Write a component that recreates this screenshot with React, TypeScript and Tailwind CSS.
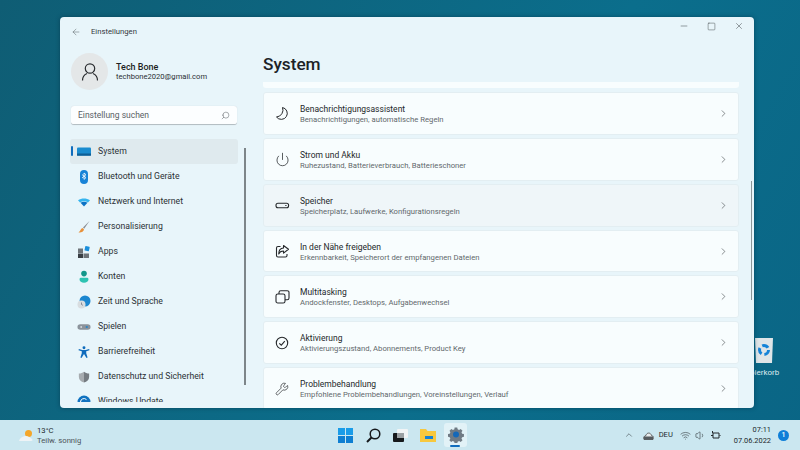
import { ChevronRight, Power, Wrench, Search, ArrowLeft, Minus, Square, X, ChevronUp, Wifi, Volume1 } from 'lucide-react';
import type { ReactNode } from 'react';

const cards: { title: string; sub: string; icon: ReactNode; hover?: boolean; h: string }[] = [
    {
        title: 'Benachrichtigungsassistent',
        sub: 'Benachrichtigungen, automatische Regeln',
        h: 'h-[43px]',
        icon: (
            <svg width="15" height="15" viewBox="0 0 15 15" fill="none" stroke="currentColor" strokeWidth="1">
                <path d="M7.500 1.500A6 6 0 1 1 1.500 11 A7 7 0 0 0 7.500 1.500z" strokeLinejoin="round" />
            </svg>
        ),
    },
    { title: 'Strom und Akku', sub: 'Ruhezustand, Batterieverbrauch, Batterieschoner', icon: <Power size={15} strokeWidth={1.2} />, h: 'h-[43px]' },
    {
        title: 'Speicher',
        sub: 'Speicherplatz, Laufwerke, Konfigurationsregeln',
        hover: true,
        h: 'h-[43px]',
        icon: (
            <svg width="15" height="15" viewBox="0 0 15 15" fill="none" stroke="currentColor" strokeWidth="1.100">
                <rect x="1" y="5.200" width="12.600" height="4.600" rx="2" />
                <path d="M10.300 7.500h1.200" />
            </svg>
        ),
    },
    {
        title: 'In der Nähe freigeben',
        sub: 'Erkennbarkeit, Speicherort der empfangenen Dateien',
        h: 'h-[42px]',
        icon: (
            <svg width="15" height="15" viewBox="0 0 15 15" fill="none" stroke="currentColor" strokeWidth="1.100" strokeLinejoin="round">
                <path d="M5.500 2.500H3a1.500 1.500 0 0 0-1.500 1.500v7.500A1.500 1.500 0 0 0 3 13h7.500a1.500 1.500 0 0 0 1.500-1.500V10" />
                <path d="M8.500 1.500l5 3.800-5 3.800V7c-2.500 0-4 1-4.800 3 0-3.500 1.800-5.800 4.800-6z" />
            </svg>
        ),
    },
    {
        title: 'Multitasking',
        sub: 'Andockfenster, Desktops, Aufgabenwechsel',
        h: 'h-[43px]',
        icon: (
            <svg width="15" height="15" viewBox="0 0 15 15" fill="none" stroke="currentColor" strokeWidth="1.100">
                <rect x="1" y="5" width="9" height="9" rx="1.800" />
                <path d="M4 5V3.500A1.800 1.800 0 0 1 5.800 1.700h6.400A1.800 1.800 0 0 1 14 3.500v5.400a1.800 1.800 0 0 1-1.800 1.800H10" />
            </svg>
        ),
    },
    {
        title: 'Aktivierung',
        sub: 'Aktivierungszustand, Abonnements, Product Key',
        h: 'h-[43px]',
        icon: (
            <svg width="14" height="14" viewBox="0 0 14 14" fill="none" stroke="currentColor" strokeWidth="1.100">
                <circle cx="7" cy="7" r="5.700" />
                <path d="M4.300 7.300l2 1.900 3.500-4" />
            </svg>
        ),
    },
    { title: 'Problembehandlung', sub: 'Empfohlene Problembehandlungen, Voreinstellungen, Verlauf', icon: <Wrench size={14} strokeWidth={1.2} />, h: 'h-[43px]' },
];

const navIcon = {
    system: (
        <svg width="14" height="14" viewBox="0 0 14 14">
            <rect x="0" y="2.500" width="14" height="8" rx="1" fill="#1a8ccf" />
            <rect x="0" y="8.500" width="14" height="2.200" fill="#0e5f96" />
        </svg>
    ),
    bluetooth: (
        <svg width="14" height="14" viewBox="0 0 14 14">
            <rect x="3" y="0" width="8" height="14" rx="4" fill="#1883d7" />
            <path d="M5 4.600l4 3-2 1.800V3l2 1.700-4 3.300" fill="none" stroke="#fff" strokeWidth="0.800" />
        </svg>
    ),
    network: (
        <svg width="14" height="14" viewBox="0 0 14 14">
            <path d="M1 5.200c3.500-2.400 8.500-2.400 12 0L11 7.400C8.500 5.800 5.500 5.800 3 7.400z" fill="#35b4ee" />
            <path d="M3.500 7.800c2.200-1.400 4.800-1.400 7 0L7 11.400z" fill="#0b72c4" />
        </svg>
    ),
    brush: (
        <svg width="14" height="14" viewBox="0 0 14 14">
            <path d="M12.500 1L6 7.500l1.200 1.200z" fill="#8a8f96" />
            <path d="M5.500 8C3.500 8.500 3.500 11 1.500 12.500c2.500.4 5.200-.6 5.500-3.200z" fill="#e8913a" />
        </svg>
    ),
    apps: (
        <svg width="14" height="14" viewBox="0 0 14 14">
            <rect x="1" y="3.500" width="5" height="4.500" fill="#6e7479" />
            <rect x="1" y="8.500" width="5" height="4.500" fill="#3a3f44" />
            <rect x="6.500" y="8.500" width="5.500" height="4.500" fill="#6e7479" />
            <rect x="8" y="1.500" width="4.500" height="4.500" rx="0.500" fill="#1b8fdb" transform="rotate(12 10.500 3)" />
        </svg>
    ),
    konten: (
        <svg width="14" height="14" viewBox="0 0 14 14">
            <circle cx="7" cy="3.600" r="2.800" fill="#12968a" />
            <path d="M2.500 9c0-1 1-1.300 2-1.300h5c1 0 2 .3 2 1.300 0 2.500-2 3.800-4.500 3.800S2.500 11.500 2.500 9z" fill="#2dc3b2" />
        </svg>
    ),
    zeit: (
        <svg width="14" height="14" viewBox="0 0 14 14">
            <circle cx="8" cy="6" r="5.500" fill="#1b87d0" />
            <circle cx="4.500" cy="9.500" r="4" fill="#d8dde0" />
            <path d="M4.500 7.500v2l1.400.8" fill="none" stroke="#667" strokeWidth="0.700" />
        </svg>
    ),
    spielen: (
        <svg width="15" height="14" viewBox="0 0 15 14">
            <rect x="0.500" y="4" width="14" height="6" rx="3" fill="#8b939b" />
            <circle cx="4.500" cy="7" r="1" fill="#d5dadd" />
            <circle cx="10.500" cy="7" r="1.200" fill="#2a86c8" />
        </svg>
    ),
    barriere: (
        <svg width="12" height="12" viewBox="0 0 14 14" fill="#0f6cbd">
            <circle cx="7" cy="2" r="1.700" />
            <path d="M1 3.600l4 1.200h4l4-1.200.4 1.300L9.600 6.200v2.400l1.600 4.900-1.300.4L7 9.200l-2.900 4.700-1.300-.4 1.600-4.900V6.200L.6 4.900z" />
        </svg>
    ),
    schutz: (
        <svg width="12" height="12" viewBox="0 0 14 14">
            <path d="M7 .8c1.700 1.300 3.600 2 6 2.100v4C13 10.300 10.500 12.300 7 13.500z" fill="#757b80" />
            <path d="M7 .8C5.300 2.100 3.400 2.800 1 2.900v4c0 3.400 2.500 5.400 6 6.600z" fill="#a6abaf" />
        </svg>
    ),
    update: (
        <svg width="14" height="14" viewBox="0 0 14 14">
            <circle cx="7" cy="7" r="6.500" fill="#1072c0" />
            <path d="M3.500 7a3.500 3.500 0 0 1 6-2.400M10.500 7a3.500 3.500 0 0 1-6 2.400" fill="none" stroke="#fff" strokeWidth="1" />
        </svg>
    ),
};

const navItems: { label: string; icon: ReactNode; active?: boolean }[] = [
    { label: 'System', icon: navIcon.system, active: true },
    { label: 'Bluetooth und Geräte', icon: navIcon.bluetooth },
    { label: 'Netzwerk und Internet', icon: navIcon.network },
    { label: 'Personalisierung', icon: navIcon.brush },
    { label: 'Apps', icon: navIcon.apps },
    { label: 'Konten', icon: navIcon.konten },
    { label: 'Zeit und Sprache', icon: navIcon.zeit },
    { label: 'Spielen', icon: navIcon.spielen },
    { label: 'Barrierefreiheit', icon: navIcon.barriere },
    { label: 'Datenschutz und Sicherheit', icon: navIcon.schutz },
    { label: 'Windows Update', icon: navIcon.update },
];

function Sidebar() {
    return (
        <div className="relative flex w-[203px] shrink-0 flex-col overflow-hidden">
            <div className="flex h-[28px] shrink-0 items-center pl-[11px] pt-[1px] text-[#555c61]">
                <ArrowLeft size={10} strokeWidth={1.2} />
                <span className="ml-[10px] text-[7.700px] text-[#33393d]">Einstellungen</span>
            </div>
            <div className="mt-[8px] flex shrink-0 items-center pl-[11px]">
                <div className="flex h-[37px] w-[37px] items-center justify-center rounded-full bg-[#e4e7e8]">
                    <svg width="20" height="20" viewBox="0 0 20 20" fill="none" stroke="#2a2d30" strokeWidth="1.200">
                        <circle cx="10" cy="6.500" r="4.700" />
                        <path d="M2.500 18.500c0-3.500 2.200-6 4.500-7M17.500 18.500c0-3.500-2.200-6-4.500-7" />
                    </svg>
                </div>
                <div className="ml-[8px] flex flex-col">
                    <span className="text-[9px] font-medium leading-[10px] text-[#1c1f22]">Tech Bone</span>
                    <span className="text-[7.600px] leading-[10px] text-[#2b3034]">techbone2020@gmail.com</span>
                </div>
            </div>
            <div className="ml-[11px] mt-[16px] flex h-[19px] w-[166px] shrink-0 items-center justify-between rounded-[3px] border-b border-b-[#b5bfc4] bg-[#fcfeff] pl-[7px] pr-[7px] pt-[1px] shadow-[0_0_1px_#c3cdd2]">
                <span className="text-[8.500px] text-[#5a6165]">Einstellung suchen</span>
                <Search size={9} strokeWidth={1.2} className="-scale-x-100 text-[#444a4e]" />
            </div>
            <div className="mt-[14px] flex h-[263px] shrink-0 flex-col overflow-hidden pl-[10px]">
                {navItems.map((item) => (
                    <div key={item.label} className={`relative flex h-[25px] w-[168px] shrink-0 items-center pl-[7px] ${item.active ? 'rounded-[3px] bg-[#dfeaee]' : ''}`}>
                        {item.active && <span className="absolute left-[1px] top-[7px] h-[10px] w-[2px] rounded-full bg-[#0f6cbd]" />}
                        <span className="flex w-[14px] items-center justify-center">{item.icon}</span>
                        <span className="ml-[7px] whitespace-nowrap text-[8.700px] text-[#2b3135]">{item.label}</span>
                    </div>
                ))}
            </div>
            <span className="absolute left-[184px] top-[131px] h-[237px] w-[1.500px] bg-[#7d8589]" />
        </div>
    );
}

function Card({ title, sub, icon, hover, h }: (typeof cards)[number]) {
    return (
        <div className={`flex ${h} shrink-0 items-center rounded-[3px] border border-[#e3eef2] pl-[10px] pr-[9px] ${hover ? 'bg-[#eff6f9]' : 'bg-[#f8fdfe]'}`}>
            <span className="flex w-[16px] items-center justify-center text-[#26292c]">{icon}</span>
            <div className="ml-[10px] flex flex-1 flex-col pt-[2px]">
                <span className="text-[8.500px] leading-[11px] text-[#24282b]">{title}</span>
                <span className="text-[7.700px] leading-[10px] text-[#62686c]">{sub}</span>
            </div>
            <ChevronRight size={11} strokeWidth={1.3} className="text-[#3c4246]" />
        </div>
    );
}

function Content() {
    return (
        <div className="relative flex flex-1 flex-col overflow-hidden">
            <div className="flex h-[18px] shrink-0 items-center justify-end gap-[18px] pr-[10px] text-[#3a4044]">
                <Minus size={10} strokeWidth={1.2} />
                <Square size={9} strokeWidth={1.2} />
                <X size={10} strokeWidth={1.2} />
            </div>
            <h1 className="mt-[15px] mb-[4px] h-[28px] shrink-0 text-[17.200px] font-medium leading-[28px] text-[#1c2226]">System</h1>
            <div className="flex w-[476px] shrink-0 flex-col gap-[3px]">
                <div className="mb-[1px] h-[6px] shrink-0 rounded-b-[3px] bg-[#f8fdfe]" />
                {cards.map((card) => (
                    <Card key={card.title} {...card} />
                ))}
            </div>
            <span className="absolute right-[2px] top-[164px] h-[119px] w-[1.500px] bg-[#8a9598]" />
        </div>
    );
}

function Taskbar() {
    return (
        <div className="flex h-[30px] shrink-0 items-center bg-[#cbe7f0] text-[#22282c]">
            <div className="flex w-[338px] shrink-0 items-center pl-[18px]">
                <svg width="17" height="15" viewBox="0 0 17 15">
                    <circle cx="10.500" cy="5.500" r="3.500" fill="#f4a62a" />
                    <path d="M1 13c.5-2.500 3-4.500 6-5 2.500-.5 5 1 7 3 1 1 .5 2-1 2z" fill="#eef3f6" />
                </svg>
                <div className="ml-[2px] flex flex-col pt-[2px]">
                    <span className="text-[7.700px] leading-[10px]">13°C</span>
                    <span className="text-[7.700px] leading-[10px] text-[#4b5358]">Teilw. sonnig</span>
                </div>
            </div>
            <div className="flex items-center">
                <svg width="15" height="15" viewBox="0 0 15 15" className="mr-[13px]">
                    <rect x="0" y="0" width="7" height="7" fill="#1a9ce8" />
                    <rect x="8" y="0" width="7" height="7" fill="#1a9ce8" />
                    <rect x="0" y="8" width="7" height="7" fill="#0f7fd2" />
                    <rect x="8" y="8" width="7" height="7" fill="#0f7fd2" />
                </svg>
                <svg width="15" height="15" viewBox="0 0 15 15" fill="none" stroke="#16191c" strokeWidth="1.500" className="mr-[12px]">
                    <circle cx="9" cy="6" r="4.800" />
                    <path d="M5.500 9.500L1 14" strokeWidth="2" />
                </svg>
                <svg width="15" height="13" viewBox="0 0 15 13" className="mr-[12px]">
                    <rect x="4" y="0" width="11" height="9" rx="1" fill="#f1f4f5" />
                    <rect x="0" y="4" width="11" height="9" rx="1" fill="#16191c" />
                    <rect x="4" y="4" width="7" height="5" fill="#9aa0a3" />
                </svg>
                <svg width="16" height="14" viewBox="0 0 16 14" className="mr-[8px]">
                    <path d="M0 1h6l1.500 2H16v11H0z" fill="#f7c83e" />
                    <rect x="5" y="8" width="8" height="3" fill="#1381d6" />
                </svg>
                <div className="relative flex h-[24px] w-[23px] items-center justify-center rounded-[3px] bg-[#e2f2f7]">
                    <svg width="16" height="16" viewBox="0 0 16 16">
                        <path d="M6.500 0.500h3l.4 2 1.600.7 1.800-1.100 2 2-1.100 1.800.7 1.600 2 .4v3l-2 .4-.7 1.600 1.100 1.800-2 2-1.800-1.100-1.600.7-.4 2h-3l-.4-2-1.600-.7-1.800 1.100-2-2 1.100-1.800-.7-1.600-2-.4v-3l2-.4.700-1.600L.9 4.100l2-2 1.800 1.100 1.600-.7z" fill="#6f7a84" transform="scale(0.9) translate(0.800 0)" />
                        <circle cx="8" cy="7.500" r="3" fill="#1568b8" />
                    </svg>
                    <span className="absolute bottom-[0px] left-[6px] h-[2px] w-[10px] rounded-full bg-[#0f6cbd]" />
                </div>
            </div>
            <div className="ml-auto flex items-center pr-[11px]">
                <ChevronUp size={10} strokeWidth={1.2} />
                <svg width="11" height="9" viewBox="0 0 11 9" className="ml-[9px]">
                    <path d="M1 8.500c-1-2 0-3.500 2-4C3.500 1.500 7.500 1 8.500 4.500c2 .5 3 2.500 1.500 4z" fill="#e9eced" stroke="#444" strokeWidth="0.800" />
                    <rect x="1" y="5.500" width="9" height="3" fill="#555b5f" />
                </svg>
                <span className="ml-[5px] text-[7.600px]">DEU</span>
                <Wifi size={11} strokeWidth={1.2} className="ml-[7px]" />
                <Volume1 size={11} strokeWidth={1.2} className="ml-[4px]" />
                <svg width="11" height="11" viewBox="0 0 11 11" fill="none" stroke="#22282c" strokeWidth="1" className="ml-[4px]">
                    <path d="M3 3h6v5H3zM3 5.500H1M9.500 5.500h1" />
                    <path d="M2.500 1v2" />
                </svg>
                <div className="ml-[13px] flex flex-col items-end">
                    <span className="text-[7.400px] leading-[11px]">07:11</span>
                    <span className="text-[7.400px] leading-[11px]">07.06.2022</span>
                </div>
                <span className="ml-[7px] flex h-[11px] w-[11px] items-center justify-center rounded-full bg-[#0f7fd8] text-[7px] font-medium text-white">1</span>
            </div>
        </div>
    );
}

export default function App() {
    return (
        <div className='relative flex h-[450px] w-[800px] flex-col overflow-hidden bg-[linear-gradient(120deg,#0f5d74,#0b6e8c_60%,#0a6585)] font-["Roboto","Noto_Sans",sans-serif]'>
            {/* desktop icon sits behind the window */}
            <div className="absolute left-[720px] top-[338px] flex w-[80px] flex-col items-center">
                <svg width="18" height="25" viewBox="0 0 18 25" className="ml-[7px]">
                    <path d="M0 0h18l-1 25H1z" fill="#dfe5e8" />
                    <circle cx="9" cy="12" r="4.500" fill="none" stroke="#1583d8" strokeWidth="3" strokeDasharray="6.500 2.900" />
                </svg>
                <span className="mt-[5px] text-[8px] leading-[10px] text-[#dfeaee]">Papierkorb</span>
            </div>

            <div className="flex h-[420px] shrink-0 flex-col pl-[60px] pt-[17px]">
                <div className="relative flex h-[391px] w-[694px] overflow-hidden rounded-[4px] bg-[#e8f5fa] shadow-[0_0_4px_rgba(0,40,60,0.5)]">
                    <Sidebar />
                    <Content />
                </div>
            </div>
            <Taskbar />
        </div>
    );
}
